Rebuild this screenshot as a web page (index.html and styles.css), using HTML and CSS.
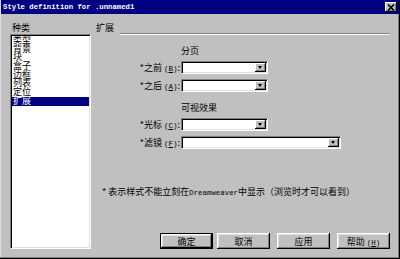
FILE: index.html
```html
<!DOCTYPE html>
<html lang="zh-CN">
<head>
    <meta charset="UTF-8">
    <title>Style definition for .unnamed1</title>
    <link rel="stylesheet" href="styles.css">
</head>
<body>
    <div class="window">
        <div class="titlebar">
            <span class="title">Style definition for .unnamed1</span>
            <span class="close">
                <svg width="8" height="7" viewBox="0 0 8 7"><path d="M1 0.5 L7 6.5 M7 0.5 L1 6.5" stroke="#000" stroke-width="1.6"/></svg>
            </span>
        </div>
        <div class="main">
            <div class="category">
                <div class="caption">种类</div>
                <ul class="list">
                    <li>类型</li>
                    <li>背景</li>
                    <li>块</li>
                    <li>盒子</li>
                    <li>边框</li>
                    <li>列表</li>
                    <li>定位</li>
                    <li class="selected">扩展</li>
                </ul>
            </div>
            <div class="panel">
                <div class="panel-head">
                    <span>扩展</span>
                    <div class="rule"></div>
                </div>

                <div class="group">分页</div>
                <div class="row first">
                    <label>*之前 <span class="key">(<u>B</u>)</span>:</label>
                    <div class="combo"><span class="arrow"></span></div>
                </div>
                <div class="row">
                    <label>*之后 <span class="key">(<u>A</u>)</span>:</label>
                    <div class="combo"><span class="arrow"></span></div>
                </div>

                <div class="group second">可视效果</div>
                <div class="row first">
                    <label>*光标 <span class="key">(<u>C</u>)</span>:</label>
                    <div class="combo"><span class="arrow"></span></div>
                </div>
                <div class="row">
                    <label>*滤镜 <span class="key">(<u>F</u>)</span>:</label>
                    <div class="combo wide"><span class="arrow"></span></div>
                </div>

                <p class="note">* 表示样式不能立刻在<span class="mono">Dreamweaver</span>中显示（浏览时才可以看到）</p>

                <div class="buttons">
                    <button class="btn default">确定</button>
                    <button class="btn">取消</button>
                    <button class="btn">应用</button>
                    <button class="btn">帮助 <span class="key">(<u>H</u>)</span></button>
                </div>
            </div>
        </div>
    </div>
</body>
</html>
```

FILE: styles.css
```css
body {
    margin: 0;
    font-family: "Noto Sans CJK SC", "Noto Sans", sans-serif;
    font-size: 9px;
    color: #000;
}

.window {
    width: 400px;
    height: 259px;
    box-sizing: border-box;
    background-color: #c0c0c0;
    display: flex;
    flex-direction: column;
    box-shadow: inset -1px -1px #000, inset -2px -2px #808080, inset 1px 0 #dfdfdf;
}

/* title bar */
.titlebar {
    height: 14px;
    margin: 0 1px;
    padding: 0 2px;
    background-color: #000080;
    display: flex;
    align-items: center;
    justify-content: space-between;
}

.title {
    color: #fff;
    font: bold 7.3px "Liberation Mono", monospace;
}

.close {
    width: 12px;
    height: 10px;
    box-sizing: border-box;
    background-color: #c0c0c0;
    display: flex;
    align-items: center;
    justify-content: center;
    box-shadow: inset -1px -1px #000, inset 1px 1px #fff, inset -2px -2px #808080;
}

/* body of the dialog */
.main {
    flex: 1;
    display: flex;
    gap: 5px;
    padding: 8px 9px 10px 10px;
}

.category {
    width: 81px;
    display: flex;
    flex-direction: column;
}

.caption {
    height: 12px;
    line-height: 12px;
    padding-left: 2px;
}

.list {
    flex: 1;
    margin: 0;
    padding: 1px;
    list-style: none;
    background-color: #fff;
    border: 1px solid;
    border-color: #808080 #fff #fff #808080;
    box-shadow: inset 1px 1px #000, inset -1px -1px #dfdfdf;
}

.list li {
    line-height: 8.7px;
    height: 8.7px;
    padding-left: 1px;
    white-space: nowrap;
}

.list li.selected {
    background-color: #000080;
    color: #fff;
}

.panel {
    flex: 1;
    display: flex;
    flex-direction: column;
}

.panel-head {
    height: 14px;
    display: flex;
    align-items: flex-end;
}

.panel-head span {
    align-self: flex-start;
    line-height: 12px;
}

.rule {
    flex: 1;
    border-top: 1px solid #808080;
    border-bottom: 1px solid #fff;
    margin: 0 1px 1px 6px;
}

.group {
    margin-top: 9px;
    line-height: 12px;
    padding-left: 85px;
}

.group.second {
    margin-top: 10px;
}

.row {
    display: flex;
    align-items: center;
    height: 13px;
    margin-top: 5px;
}

.row.first {
    margin-top: 4px;
}

.row label {
    width: 84px;
    text-align: right;
    white-space: nowrap;
    margin-right: 1px;
}

.key {
    font-family: "Liberation Mono", monospace;
    font-size: 7.5px;
}

.combo {
    width: 87px;
    height: 13px;
    box-sizing: border-box;
    padding: 1px;
    background-color: #fff;
    border: 1px solid;
    border-color: #808080 #fff #fff #808080;
    box-shadow: inset 1px 1px #000, inset -1px -1px #dfdfdf;
    display: flex;
    justify-content: flex-end;
    align-items: center;
}

.combo.wide {
    width: 160px;
}

.arrow {
    width: 11px;
    height: 9px;
    box-sizing: border-box;
    background-color: #c0c0c0;
    box-shadow: inset -1px -1px #000, inset 1px 1px #fff, inset -2px -2px #808080;
    display: flex;
    align-items: center;
    justify-content: center;
}

.arrow::after {
    content: "";
    border-left: 2.5px solid transparent;
    border-right: 2.5px solid transparent;
    border-top: 3px solid #000;
    margin: 0 1px 1px 0;
}

.note {
    margin: 37px 0 0 6px;
    line-height: 12px;
    white-space: nowrap;
}

.mono {
    font-family: "Liberation Mono", monospace;
    font-size: 7.4px;
}

/* footer buttons */
.buttons {
    margin-top: auto;
    display: flex;
    justify-content: flex-end;
    gap: 7px;
    padding-right: 1px;
}

.btn {
    width: 53px;
    height: 16px;
    padding: 0;
    border: none;
    font-family: inherit;
    font-size: 9px;
    background-color: #c0c0c0;
    box-shadow: inset -1px -1px #000, inset 1px 1px #fff, inset -2px -2px #808080, inset 2px 2px #dfdfdf;
}

.btn.default {
    margin-right: -3px;
    border: 1px solid #000;
}
```
